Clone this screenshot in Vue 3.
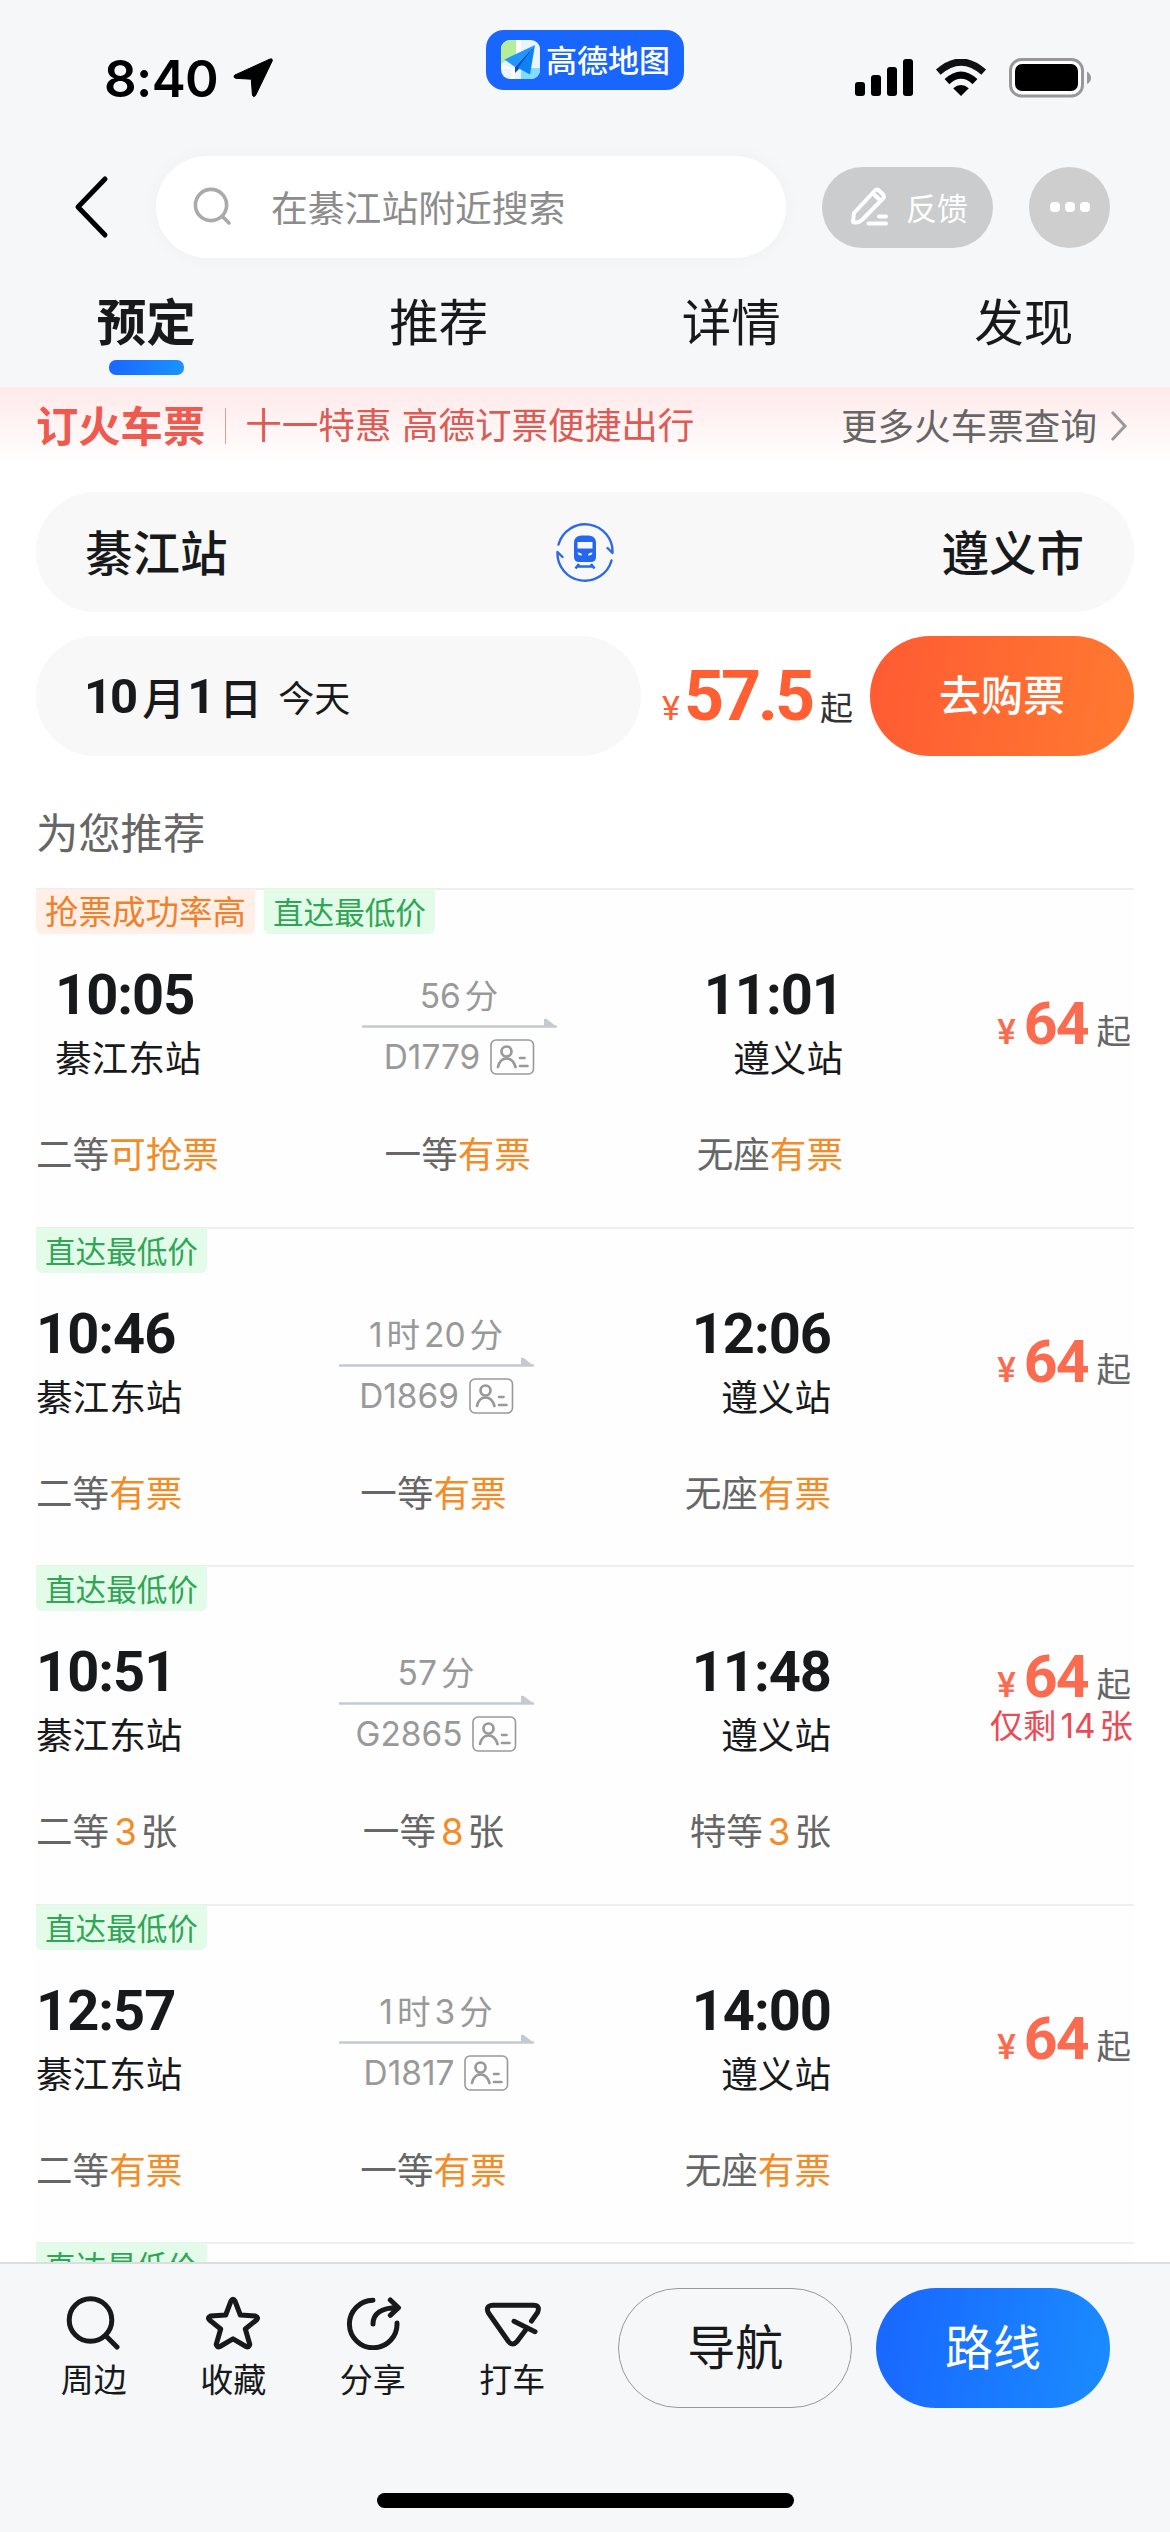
<template>
  <div class="page">
    <header class="status-bar">
      <div class="clock">
        <span>8:40</span>
        <svg width="42" height="42" viewBox="0 0 42 42"><path d="M38 2L2.5 18.2Q1 20.6 3.5 21.3L19.3 22.2L20.4 38Q21.4 41 23.5 38.6L40.2 4Q40.8 1 38 2Z" fill="#000" stroke="#000" stroke-linejoin="round"/></svg>
      </div>
      <div class="island">
        <svg width="40" height="40" viewBox="0 0 40 40">
          <defs><clipPath id="logo-clip"><rect width="39" height="39" rx="9"/></clipPath></defs>
          <g clip-path="url(#logo-clip)">
            <rect width="40" height="40" fill="#e9f4ff"/>
            <path d="M0 0H15V15L0 24Z" fill="#b5ee9a"/>
            <path d="M15 0H20V14L15 16Z M0 25L14 29V39H10V29H0Z" fill="#fff"/>
            <path d="M20 28H40V40H20Z" fill="#83dcff"/>
          </g>
          <path d="M34 5L3.5 19.5L14 27Z" fill="#2196ff"/>
          <path d="M34 5L14 27V33L18 29Z" fill="#0651c8"/>
          <path d="M34 5L17 28L29 34.5Z" fill="#0c83f5"/>
        </svg>
        <span>高德地图</span>
      </div>
      <div class="signals">
        <svg width="59" height="38" viewBox="0 0 59 38">
          <rect x="0" y="23" width="10" height="14" rx="3"/>
          <rect x="16" y="16" width="10" height="21" rx="3"/>
          <rect x="32" y="8" width="10" height="29" rx="3"/>
          <rect x="48" y="0" width="10" height="37" rx="3"/>
        </svg>
        <svg class="wifi" width="52" height="38" viewBox="0 0 52 38">
          <path d="M3.3 13.2Q26 -7 48.7 13.2" fill="none" stroke="#111" stroke-width="7"/>
          <path d="M12 22.6Q26 9.6 40 22.6" fill="none" stroke="#000" stroke-width="7"/>
          <path d="M18.2 29.2Q26 23 33.8 29.2L26 37Z"/>
        </svg>
        <svg class="battery" width="84" height="40" viewBox="0 0 84 40">
          <rect x="1.5" y="1.5" width="72" height="36.5" rx="11" fill="#fff" stroke="#98989a" stroke-width="3"/>
          <rect x="6" y="6" width="63" height="27" rx="7"/>
          <path d="M78 13.5Q82 16 82 20T78 26Z" fill="#98989a"/>
        </svg>
      </div>
    </header>

    <div class="search-row">
      <svg class="back" width="36" height="64" viewBox="0 0 36 64"><path d="M31 4L4 32L31 60" fill="none" stroke="#000" stroke-width="5" stroke-linecap="round" stroke-linejoin="round"/></svg>
      <div class="search-box">
        <svg width="40" height="40" viewBox="0 0 40 40"><circle cx="18" cy="18" r="15.6"/><path d="M30 30L36 36"/></svg>
        <span>在綦江站附近搜索</span>
      </div>
      <div class="feedback">
        <svg width="42" height="42" viewBox="0 0 42 42" fill="none" stroke="#fff" stroke-width="4" stroke-linecap="round" stroke-linejoin="round">
          <path d="M4 36L5 27L26 4.5Q28 2.5 30 4.5L34 8.5Q36 10.5 34 12.5L13 34Q9 37.5 4 36ZM24.5 8L31 14"/>
          <path d="M19.5 37.5H37M30 30.5H37"/>
        </svg>
        <span>反馈</span>
      </div>
      <div class="more"><i></i><i></i><i></i></div>
    </div>

    <nav class="tabs">
      <div v-for="(tab, i) in tabs" :key="tab" class="tab" :class="{ active: i === 0 }">{{ tab }}</div>
    </nav>

    <main class="content">
      <div class="banner">
        <strong>订火车票</strong>
        <span class="promo">十一特惠 高德订票便捷出行</span>
        <span class="query">更多火车票查询</span>
        <svg width="18" height="32" viewBox="0 0 18 32"><path d="M2 2L15 16L2 30" fill="none" stroke="#999" stroke-width="3"/></svg>
      </div>

      <div class="route">
        <span>綦江站</span>
        <svg width="60" height="60" viewBox="0 0 60 60">
          <g fill="none" stroke="#2d69e8" stroke-width="2.4" stroke-linecap="round" stroke-linejoin="round">
            <path d="M3.5 22.5A27.5 27.5 0 0 1 57.5 31L52.5 26"/>
            <path d="M56.5 38.5A27.5 27.5 0 0 1 2.5 30L7.5 35"/>
          </g>
          <path fill="#2468f2" fill-rule="evenodd" d="M26 13.5H34Q41 14 41 21V35Q41 40 36 40H24Q19 40 19 35V21Q19 14 26 13.5ZM22.5 20V26.5H37.5V20ZM22.5 30.5Q23 34 27 33.5Q27 30.5 22.5 30.5ZM37.5 30.5Q33 30.5 33 33.5Q37 34 37.5 30.5Z"/>
          <path d="M24 42L20.5 46.5M36 42L39.5 46.5M23 44.5H37" stroke="#2468f2" stroke-width="2.6"/>
        </svg>
        <span>遵义市</span>
      </div>

      <div class="booking">
        <div class="date"><b>10</b><span>月</span><b>1</b><span>日</span><em>今天</em></div>
        <div class="from-price"><i>¥</i><b>57.5</b><span>起</span></div>
        <div class="buy">去购票</div>
      </div>

      <h2>为您推荐</h2>

      <section v-for="train in trains" :key="train.no" class="train" :class="{ wide: train.grab }">
        <div class="tags">
          <span v-if="train.grab" class="tag grab">抢票成功率高</span>
          <span class="tag cheap">直达最低价</span>
        </div>
        <div v-if="train.depart" class="body">
          <div class="trip">
            <div class="journey">
              <div class="stop">
                <div class="time">{{ train.depart }}</div>
                <div class="station">綦江东站</div>
              </div>
              <div class="middle">
                <div class="duration"><template v-for="(p, i) in train.duration" :key="i"><span :class="{ num: i % 2 === 0 }">{{ p }}</span></template></div>
                <svg width="195" height="10" viewBox="0 0 195 10"><path d="M1 8.5H194" stroke="#c5c9d2" stroke-width="2.6" stroke-linecap="round"/><path d="M182 1Q184 0 186 2L195 9H182Z" fill="#c5c9d2"/></svg>
                <div class="number">
                  <span>{{ train.no }}</span>
                  <svg width="45" height="36" viewBox="0 0 45 36" fill="none" stroke="#999">
                    <rect x="1" y="1" width="42.5" height="34" rx="5" stroke-width="1.6"/>
                    <g stroke-width="2.7" stroke-linecap="round"><circle cx="16.5" cy="12.5" r="5"/><path d="M8 28Q10 19.5 16.5 19.5T25.5 28M30 19H34.5M30 27H37.5"/></g>
                  </svg>
                </div>
              </div>
              <div class="stop end">
                <div class="time">{{ train.arrive }}</div>
                <div class="station">遵义站</div>
              </div>
            </div>
            <div class="seats">
              <div v-for="seat in train.seats" :key="seat.name">{{ seat.name }}<b v-if="seat.count" class="count">{{ seat.count }}</b><template v-if="seat.count">张</template><b v-else>{{ seat.state || '有票' }}</b></div>
            </div>
          </div>
          <div class="price">
            <div class="amount"><i>¥</i><b>64</b><span>起</span></div>
            <div v-if="train.left" class="left">仅剩<span>{{ train.left }}</span>张</div>
          </div>
        </div>
      </section>
    </main>

    <footer class="bottom">
      <div class="actions">
        <div class="action">
          <svg viewBox="0 0 60 60"><circle cx="26.5" cy="30" r="21.3"/><path d="M42 46L53 57"/></svg>
          <span>周边</span>
        </div>
        <div class="action">
          <svg viewBox="0 0 60 60"><path d="M28 11Q30 7.5 32 11L37.3 25L52.5 26Q56 27.5 53.5 30L42.3 39L46.8 54.5Q46 58 43 56.5L30 48.8L17 56.5Q14 58 13.2 54.5L17.7 39L6.5 30Q4 27.5 7.5 26L22.7 25Z"/></svg>
          <span>收藏</span>
        </div>
        <div class="action">
          <svg viewBox="0 0 60 60"><path d="M30 10.2A23.8 23.8 0 1 0 54 33M30 34C30 24 38 17.7 54 17.7M47.3 10L55.5 17.7L47.3 25.3"/></svg>
          <span>分享</span>
        </div>
        <div class="action">
          <svg viewBox="0 0 60 60"><path d="M49.5 31L55.5 22.5Q58.5 15.3 51.5 15.3H10.5Q3 16 6.5 23L26.5 51.5Q30.5 56.5 35 51.5L44 39.5M32 31.3L53 41.7"/></svg>
          <span>打车</span>
        </div>
      </div>
      <div class="btn outline">导航</div>
      <div class="btn solid">路线</div>
      <div class="home-indicator"></div>
    </footer>
  </div>
</template>

<script setup>
const tabs = ['预定', '推荐', '详情', '发现']

const trains = [
  {
    no: 'D1779',
    grab: true,
    depart: '10:05',
    arrive: '11:01',
    duration: ['56', '分'],
    seats: [{ name: '二等', state: '可抢票' }, { name: '一等' }, { name: '无座' }]
  },
  {
    no: 'D1869',
    depart: '10:46',
    arrive: '12:06',
    duration: ['1', '时', '20', '分'],
    seats: [{ name: '二等' }, { name: '一等' }, { name: '无座' }]
  },
  {
    no: 'G2865',
    depart: '10:51',
    arrive: '11:48',
    duration: ['57', '分'],
    left: 14,
    seats: [{ name: '二等', count: 3 }, { name: '一等', count: 8 }, { name: '特等', count: 3 }]
  },
  {
    no: 'D1817',
    depart: '12:57',
    arrive: '14:00',
    duration: ['1', '时', '3', '分'],
    seats: [{ name: '二等' }, { name: '一等' }, { name: '无座' }]
  },
  { no: 'next' }
]
</script>

<style>
body {
  margin: 0;
  background: #f5f7f9;
}
</style>

<style scoped>
.page {
  width: 1170px;
  height: 2532px;
  display: flex;
  flex-direction: column;
  overflow: hidden;
  background: #f5f7f9;
  color: #18191b;
  font-family: Inter, "Noto Sans CJK SC", sans-serif;
  font-size: 36px;
  white-space: nowrap;
}

svg {
  display: block;
  flex-shrink: 0;
}

i,
em {
  font-style: normal;
}

/* Status bar */
.status-bar {
  flex: 0 0 156px;
  display: flex;
  justify-content: space-between;
  box-sizing: border-box;
  padding: 0 77px 0 104px;
}

.clock {
  width: 382px;
  height: 156px;
  display: flex;
  align-items: center;
  gap: 14px;
  font-size: 51px;
  font-weight: 600;
  color: #000;
  letter-spacing: -0.6px;
}

.island {
  width: 198px;
  height: 60px;
  margin-top: 30px;
  box-sizing: border-box;
  padding-left: 15px;
  display: flex;
  align-items: center;
  gap: 5px;
  border-radius: 18px;
  background: #1966ff;
  color: #fff;
  font-size: 31px;
  font-weight: 500;
}

.island span {
  margin-top: -4px;
}

.signals {
  width: 409px;
  height: 156px;
  display: flex;
  align-items: center;
  justify-content: flex-end;
}

.wifi {
  margin-left: 21px;
}

.battery {
  margin-left: 22px;
}

/* Search */
.search-row {
  flex: 0 0 102px;
  display: flex;
  align-items: center;
  padding-left: 74px;
}

.search-box {
  width: 630px;
  height: 102px;
  margin-left: 46px;
  box-sizing: border-box;
  padding-left: 37px;
  display: flex;
  align-items: center;
  gap: 38px;
  border-radius: 51px;
  background: #fff;
  box-shadow: 0 0 20px rgba(0, 0, 0, 0.03);
  color: #8c8c8c;
  font-size: 36.8px;
}

.search-box span {
  margin-top: -3px;
}

.search-box svg {
  fill: none;
  stroke: #aaa;
  stroke-width: 3.6;
  stroke-linecap: round;
}

.feedback {
  width: 171px;
  height: 81px;
  margin-left: 36px;
  box-sizing: border-box;
  padding-left: 27px;
  display: flex;
  align-items: center;
  gap: 15px;
  border-radius: 41px;
  background: #cbcccd;
  color: #fff;
  font-size: 31px;
}

.feedback span {
  margin-top: -2px;
}

.more {
  width: 81px;
  height: 81px;
  margin-left: 36px;
  display: flex;
  align-items: center;
  justify-content: center;
  gap: 5px;
  border-radius: 50%;
  background: #cdcecd;
}

.more i {
  width: 10px;
  height: 10px;
  border-radius: 4px;
  background: #fff;
}

/* Tabs */
.tabs {
  flex: 0 0 129px;
  display: flex;
}

.tab {
  flex: 1;
  display: flex;
  flex-direction: column;
  align-items: center;
  padding-top: 30px;
  font-size: 49.5px;
  line-height: 70px;
}

.tab.active {
  font-weight: 700;
}

.tab.active::after {
  content: "";
  width: 75px;
  height: 15px;
  margin-top: 2px;
  border-radius: 7px;
  background: linear-gradient(100deg, #1966ff, #1a94ff);
}

/* Ticket search */
.content {
  flex: 1;
  min-height: 0;
  overflow: hidden;
  padding: 0 36px;
  background: linear-gradient(#ffe9e9, #fff 75px);
}

.banner {
  height: 105px;
  box-sizing: border-box;
  padding-bottom: 27px;
  display: flex;
  align-items: center;
}

.banner strong {
  margin-top: -5px;
  color: #ee5a50;
  font-size: 42.3px;
  font-weight: 700;
}

.promo {
  margin-left: 20px;
  padding-left: 19px;
  border-left: 1px solid #ee9a94;
  color: #dc5b54;
  font-size: 36.6px;
  line-height: 36px;
}

.query {
  margin: -3px 13px 0 auto;
  color: #666;
  font-size: 36.6px;
}

.banner svg {
  margin-right: 6px;
}

.route {
  height: 120px;
  padding: 0 50px 0 49px;
  display: flex;
  align-items: center;
  justify-content: space-between;
  border-radius: 60px;
  background: #f8f8f8;
  font-size: 47.5px;
  font-weight: 500;
}

.route span {
  margin-top: -3px;
}

.booking {
  margin-top: 24px;
  height: 120px;
  display: flex;
}

.date {
  width: 605px;
  box-sizing: border-box;
  padding-left: 48px;
  display: flex;
  align-items: center;
  border-radius: 60px;
  background: #f8f8f8;
  font-size: 43px;
  font-weight: 500;
}

.date b {
  font-family: Roboto, sans-serif;
  font-size: 49px;
  font-weight: 700;
  letter-spacing: -2px;
}

.date span {
  margin: 0 2px 0 6px;
}

.date em {
  margin-left: 14px;
  font-size: 36px;
  font-weight: 400;
}

.from-price {
  width: 229px;
  box-sizing: border-box;
  padding-left: 4px;
  display: flex;
  align-items: baseline;
  justify-content: center;
  line-height: 120px;
  color: #ff5f33;
}

.from-price i {
  font-family: Roboto, sans-serif;
  font-size: 34px;
}

.from-price b {
  margin: 0 8px 0 4px;
  font-family: Roboto, sans-serif;
  font-size: 70px;
  letter-spacing: -3.2px;
}

.from-price span {
  color: #333;
  font-size: 33px;
}

.buy {
  width: 264px;
  border-radius: 60px;
  background: linear-gradient(100deg, #ff5a33, #ff7a30);
  color: #fff;
  font-size: 42px;
  font-weight: 500;
  line-height: 120px;
  text-align: center;
}

h2 {
  height: 132px;
  margin: 0;
  box-sizing: border-box;
  padding-top: 48px;
  color: #666;
  font-size: 42.3px;
  font-weight: 400;
  line-height: 60px;
}

/* Train list */
.train {
  height: 338.6px;
  box-sizing: border-box;
  border-top: 2px solid #eee;
  background: #fefefe;
}

.tags {
  display: flex;
  gap: 9px;
  height: 45px;
  margin-top: -1px;
}

.tag {
  padding: 0 9px;
  border-radius: 0 0 6px 6px;
  line-height: 47px;
}

.grab {
  background: #ffefe6;
  color: #f0812c;
  font-size: 33.5px;
}

.cheap {
  background: #e3fbe9;
  color: #2fa655;
  font-size: 30.6px;
}

.body {
  display: flex;
  justify-content: space-between;
}

.trip {
  width: 795px;
}

.wide .trip {
  width: 807px;
}

.journey {
  display: flex;
  padding-top: 30px;
}

.wide .journey {
  padding-left: 19px;
}

.stop {
  width: 303px;
}

.wide .stop {
  width: 307px;
}

.stop.end,
.wide .stop.end {
  width: auto;
  margin-left: auto;
  text-align: right;
}

.time {
  height: 62px;
  font-family: Roboto, sans-serif;
  font-size: 56px;
  font-weight: 700;
  line-height: 62px;
  letter-spacing: -1px;
}

.station {
  font-size: 36.6px;
  line-height: 67px;
}

.middle {
  width: 195px;
  display: flex;
  flex-direction: column;
  align-items: center;
  color: #999;
}

.duration {
  display: flex;
  height: 54px;
  margin: 5px 5px 0 0;
  font-size: 33.5px;
  line-height: 54px;
}

.num {
  margin: 0 4px;
}

.middle > svg {
  margin-top: -5px;
}

.number {
  display: flex;
  align-items: center;
  gap: 10px;
  height: 48px;
  margin-top: 5px;
  font-size: 33.4px;
}

.seats {
  display: flex;
  justify-content: space-between;
  margin-top: 32px;
  color: #666;
  font-size: 36.6px;
  line-height: 60px;
}

.seats b {
  color: #f28c26;
  font-weight: 400;
}

.seats .count {
  margin: 0 4px 0 5px;
}

.price {
  height: 188px;
  display: flex;
  flex-direction: column;
  align-items: flex-end;
  justify-content: center;
}

.amount {
  display: flex;
  align-items: baseline;
  padding-right: 3px;
  line-height: 60px;
  color: #fb6b4f;
}

.amount i {
  font-family: Roboto, sans-serif;
  font-size: 35px;
  font-weight: 500;
}

.amount b {
  margin: 0 9px 0 8px;
  font-family: Roboto, sans-serif;
  font-size: 59px;
  letter-spacing: -2px;
}

.amount span {
  color: #666;
  font-size: 34.5px;
}

.left {
  margin: -12px 0 15px;
  padding-right: 1px;
  color: #ea4c55;
  font-size: 33.4px;
  line-height: 44px;
}

.left span {
  margin: 0 4px;
}

/* Bottom bar */
.bottom {
  position: relative;
  flex: 0 0 270px;
  box-sizing: border-box;
  padding: 24px 60px 0 24px;
  display: flex;
  align-items: flex-start;
  border-top: 2px solid #dcddde;
}

.actions {
  display: flex;
  width: 595px;
}

.action {
  width: 139.5px;
  display: flex;
  flex-direction: column;
  align-items: center;
  padding-top: 2px;
  font-size: 33px;
  line-height: 60px;
}

.action svg {
  width: 60px;
  height: 60px;
  fill: none;
  stroke: #18191b;
  stroke-width: 5;
  stroke-linecap: round;
  stroke-linejoin: round;
}

.btn {
  width: 234px;
  height: 120px;
  box-sizing: border-box;
  border-radius: 60px;
  font-size: 48px;
  line-height: 119px;
  text-align: center;
}

.outline {
  border: 1px solid #999;
  line-height: 117px;
}

.solid {
  margin-left: 24px;
  background: linear-gradient(100deg, #1966ff, #1a8cff);
  color: #fff;
}

.home-indicator {
  position: absolute;
  left: 377px;
  bottom: 24px;
  width: 417px;
  height: 15px;
  border-radius: 8px;
  background: #000;
}
</style>
